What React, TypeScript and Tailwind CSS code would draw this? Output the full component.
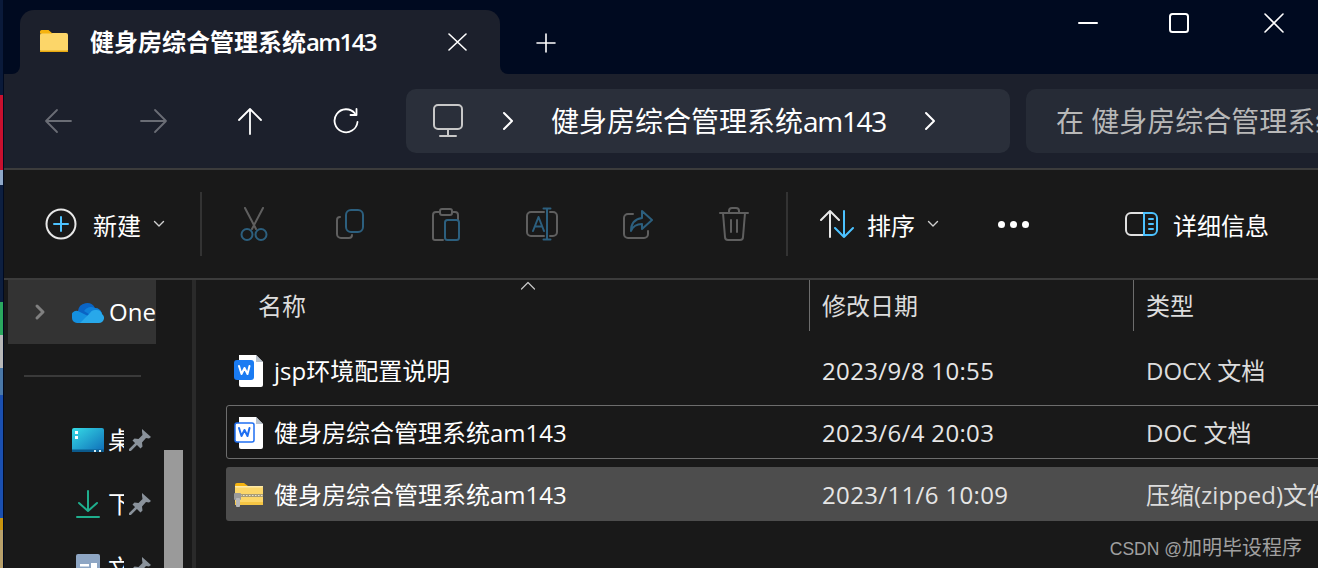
const GRAY = "#5f5f5f";
const BLUE = "#2c5f7e";

function Stroke({ w, h, children, color = "#fff", sw = 2 }: { w: number; h: number; children: React.ReactNode; color?: string; sw?: number }) {
  return (
    <svg width={w} height={h} viewBox={`0 0 ${w} ${h}`} fill="none" stroke={color} strokeWidth={sw} strokeLinecap="round" strokeLinejoin="round" className="shrink-0">
      {children}
    </svg>
  );
}

function FolderIcon() {
  return (
    <svg width="28" height="22" viewBox="0 0 28 22" className="shrink-0">
      <path d="M0 5a2 2 0 0 1 2-2h8l3-0h13a2 2 0 0 1 2 2v15a2 2 0 0 1-2 2H2a2 2 0 0 1-2-2z" fill="#fcd669" />
      <path d="M0 1.500a1.500 1.500 0 0 1 1.500-1.500h7l4 3.500h-12.500z" fill="#f5b30f" />
      <rect x="0" y="20.500" width="28" height="1.500" fill="#e8a90f" />
    </svg>
  );
}

function WordIcon({ outline }: { outline?: boolean }) {
  return (
    <svg width="30" height="32" viewBox="0 0 30 32" className="shrink-0">
      <path d="M5 0h17l7 7v23a2 2 0 0 1-2 2H7a2 2 0 0 1-2-2z" fill="#fff" />
      <path d="M22 0l7 7h-7z" fill="#b9c2cc" />
      {outline ? (
        <rect x="1" y="6" width="19" height="19" rx="2" fill="#fff" stroke="#1f6ff2" strokeWidth="1.500" />
      ) : (
        <rect x="0" y="5" width="20" height="20" rx="3" fill="#1a7bf2" />
      )}
      <path d="M5 11l2.500 8 3-6 3 6 2-8" fill="none" stroke={outline ? "#1f6ff2" : "#fff"} strokeWidth="2" strokeLinejoin="round" strokeLinecap="round" />
    </svg>
  );
}

function ZipIcon() {
  return (
    <svg width="30" height="24" viewBox="0 0 30 24" className="shrink-0">
      <path d="M1 2a2 2 0 0 1 2-2h7l4 3h-13z" fill="#f5b30f" />
      <rect x="1" y="3" width="28" height="19" rx="1.500" fill="#fcd669" />
      <rect x="1" y="3" width="28" height="1.500" fill="#fde9a6" />
      <rect x="1" y="19" width="28" height="3" fill="#f5c544" />
      <rect x="5" y="11" width="24" height="3" fill="#a89c76" />
      <path d="M6 12.500h23" stroke="#e8e4d4" strokeWidth="1" strokeDasharray="1.500 1.500" />
      <rect x="0" y="10" width="7" height="7" rx="1" fill="#9a9a9a" />
      <rect x="2" y="15" width="4" height="9" rx="1" fill="#b8b8b8" />
    </svg>
  );
}

function CloudIcon() {
  return (
    <svg width="32" height="21" viewBox="0 0 32 21" className="shrink-0">
      <path d="M6 9a9 9 0 0 1 17-3 7 7 0 0 1 7 8H4a5 5 0 0 1 2-5z" fill="#0a64c4" />
      <path d="M12 9a8 8 0 0 1 11-3 7 7 0 0 1 7 7l-10 1z" fill="#0f80d8" />
      <path d="M0 16a5 5 0 0 1 6-7l10 5 7-1-5 8H5a5 5 0 0 1-5-5z" fill="#1490df" />
      <path d="M18 11a6 6 0 0 1 6-3 6 6 0 0 1 6 4 5 5 0 0 1-3 9H8z" fill="#28a8ea" />
    </svg>
  );
}

function PinIcon() {
  return (
    <svg width="22" height="22" viewBox="0 0 22 22" className="shrink-0 ml-[5px]">
      <path d="M13 0l9 8-2 1.500-3-.5-4 4.500.5 4-2 2L3.500 11.500l2-2 4 .5 4-4-.5-3.500z" fill="#8a929b" />
      <path d="M7 15l-6 6" stroke="#8a929b" strokeWidth="2.500" strokeLinecap="round" />
    </svg>
  );
}

function DesktopIcon() {
  return (
    <svg width="32" height="24" viewBox="0 0 32 24" className="shrink-0">
      <defs>
        <linearGradient id="desk" x1="0" y1="0" x2="1" y2="1">
          <stop offset="0" stopColor="#35dbe6" />
          <stop offset="1" stopColor="#0f6cb8" />
        </linearGradient>
      </defs>
      <rect width="32" height="24" rx="2" fill="url(#desk)" />
      <rect y="21.500" width="32" height="2.500" fill="#0b5a8c" />
      <rect x="3" y="3" width="3" height="3" fill="#fff" />
      <rect x="3" y="8" width="3" height="3" fill="#fff" />
      <rect x="22" y="22" width="2" height="2" fill="#d6eef5" />
      <rect x="27" y="22" width="2" height="2" fill="#d6eef5" />
    </svg>
  );
}

function DocsIcon() {
  return (
    <svg width="24" height="28" viewBox="0 0 24 28" className="shrink-0">
      <rect width="24" height="28" rx="2" fill="#8ea6c4" />
      <rect x="4" y="10" width="9" height="2.500" fill="#fff" />
      <rect x="4" y="15" width="9" height="2.500" fill="#fff" />
      <rect x="15" y="9" width="6" height="9" fill="#fff" />
    </svg>
  );
}

function NavButton({ children }: { children: React.ReactNode }) {
  return <div className="w-[96px] flex justify-center items-center">{children}</div>;
}

function ToolButton({ children }: { children: React.ReactNode }) {
  return <div className="w-[96px] flex justify-center items-center">{children}</div>;
}

function Chevron({ color = "#d0d0d0" }: { color?: string }) {
  return (
    <Stroke w={12} h={8} color={color} sw={1.400}>
      <path d="M1.500 1.500l4.500 4.500 4.500-4.500" />
    </Stroke>
  );
}

function SideRow({ icon, label }: { icon: React.ReactNode; label: string }) {
  return (
    <div className="h-[64px] shrink-0 flex items-center">
      <div className="w-[96px] shrink-0 flex justify-end">
        <div className="w-[32px] flex justify-center">{icon}</div>
      </div>
      <div className="w-[16px] ml-[4px] shrink-0 overflow-hidden whitespace-nowrap text-[24px] leading-none text-white">{label}</div>
      <PinIcon />
    </div>
  );
}

const rows = [
  { icon: <WordIcon />, name: "jsp环境配置说明", date: "2023/9/8 10:55", type: "DOCX 文档", cls: "border-transparent" },
  { icon: <WordIcon outline />, name: "健身房综合管理系统am143", date: "2023/6/4 20:03", type: "DOC 文档", cls: "border-[#6d6d6d]" },
  { icon: <ZipIcon />, name: "健身房综合管理系统am143", date: "2023/11/6 10:09", type: "压缩(zipped)文件夹", cls: "border-transparent bg-[#4d4d4d]" },
];

export default function App() {
  return (
    <div className="relative w-[1318px] h-[568px] overflow-hidden flex bg-[#191919] font-['Open_Sans','Noto_Sans_CJK_SC',sans-serif] text-white">
      {/* bit of desktop wallpaper showing at the left edge */}
      <div className="w-[3px] shrink-0 flex flex-col">
        <div className="h-[95px] bg-[#0a1a3a]" />
        <div className="h-[75px] bg-[#c8102e]" />
        <div className="h-[15px] bg-[#8fa8c8]" />
        <div className="h-[117px] bg-[#0d1f40]" />
        <div className="h-[33px] bg-[#2aa85f]" />
        <div className="h-[33px] bg-[#b8b8b8]" />
        <div className="h-[27px] bg-[#4a78a8]" />
        <div className="h-[123px] bg-[#1a4fb0]" />
        <div className="h-[12px] bg-[#c8940f]" />
        <div className="flex-1 bg-[#b8a06a]" />
      </div>
      <div className="w-[1px] shrink-0 bg-[#000a20]" />

      <div className="flex-1 min-w-0 flex flex-col">
        {/* title bar */}
        <div className="h-[74px] shrink-0 bg-[#000a20] flex items-end pl-[16px]">
          <div className="relative w-[480px] h-[64px] bg-[#1c202c] rounded-t-[14px] flex items-start pl-[20px] pt-[20px]">
            <div className="absolute right-full bottom-0 size-2 bg-[#1c202c]">
              <div className="size-full bg-[#000a20] rounded-br-lg" />
            </div>
            <div className="absolute left-full bottom-0 size-2 bg-[#1c202c]">
              <div className="size-full bg-[#000a20] rounded-bl-lg" />
            </div>
            <FolderIcon />
            <span className="ml-[22px] text-[24px] leading-[28px] font-bold -mt-[2px] whitespace-nowrap">
              健身房综合管理系统<span className="font-semibold tracking-[-1.6px]">am143</span>
            </span>
            <div className="ml-auto mr-[33px] mt-[3px]">
              <Stroke w={19} h={18} sw={1.600}>
                <path d="M1 1l17 16M18 1L1 17" />
              </Stroke>
            </div>
          </div>
          <div className="ml-[36px] mb-[21px]">
            <Stroke w={20} h={20} sw={1.600}>
              <path d="M10 1v18M1 10h18" />
            </Stroke>
          </div>
          <div className="ml-auto self-start flex items-center h-[46px] pr-[34px]">
            <Stroke w={20} h={4} sw={2}>
              <path d="M1 2h18" />
            </Stroke>
            <div className="ml-[71px]">
              <Stroke w={20} h={20} sw={2}>
                <rect x="1" y="1" width="18" height="18" rx="2.500" />
              </Stroke>
            </div>
            <div className="ml-[75px]">
              <Stroke w={20} h={20} sw={1.600}>
                <path d="M1 1l18 18M19 1L1 19" />
              </Stroke>
            </div>
          </div>
        </div>

        {/* address bar */}
        <div className="h-[96px] shrink-0 bg-[#1c202c] border-b-2 border-[#3c3c3c] flex items-start pt-[15px]">
          <div className="h-[64px] flex items-center pl-[6px]">
            <NavButton>
              <Stroke w={28} h={26} color="#6a6d75" sw={1.800}>
                <path d="M27 13H2M13 2L2 13l11 11" />
              </Stroke>
            </NavButton>
            <NavButton>
              <Stroke w={28} h={26} color="#6a6d75" sw={1.800}>
                <path d="M1 13h25M15 2l11 11-11 11" />
              </Stroke>
            </NavButton>
            <NavButton>
              <Stroke w={26} h={28} sw={1.800}>
                <path d="M13 27V2M2 13L13 2l11 11" />
              </Stroke>
            </NavButton>
            <NavButton>
              <Stroke w={26} h={26} sw={1.800}>
                <path d="M22 5.500A11.500 11.500 0 1 0 24.500 14" />
                <path d="M23.500 1v6h-6" />
              </Stroke>
            </NavButton>
          </div>
          <div className="w-[604px] h-[64px] ml-[12px] rounded-[10px] bg-[#2a2f3a] flex items-center pl-[27px] shrink-0">
            <Stroke w={30} h={34} color="#c8c8c8" sw={2}>
              <rect x="1" y="1" width="28" height="24" rx="4" />
              <path d="M15 25v6M7 32h16" />
            </Stroke>
            <div className="ml-[39px]">
              <Stroke w={12} h={20} sw={2}>
                <path d="M2 2l8 8-8 8" />
              </Stroke>
            </div>
            <span className="ml-[37px] text-[28px] leading-none whitespace-nowrap w-[373px]">
              健身房综合管理系统<span className="tracking-[-1.3px]">am143</span>
            </span>
            <Stroke w={12} h={20} sw={2}>
              <path d="M2 2l8 8-8 8" />
            </Stroke>
          </div>
          <div className="flex-1 h-[64px] ml-[16px] rounded-l-[10px] bg-[#262b36] flex items-center pl-[30px] overflow-hidden">
            <span className="text-[28px] leading-none whitespace-nowrap text-[#b8b8b8]">在 健身房综合管理系统am143 中搜索</span>
          </div>
        </div>

        {/* command bar */}
        <div className="h-[110px] shrink-0 border-b-2 border-[#3c3c3c] flex items-center">
          <div className="w-[196px] flex items-center pl-[41px] shrink-0">
            <svg width="32" height="32" viewBox="0 0 32 32" fill="none" strokeLinecap="round" className="shrink-0">
              <circle cx="16" cy="16" r="14.500" stroke="#e8e8e8" strokeWidth="2" />
              <path d="M16 9v14M9 16h14" stroke="#4cc2ff" strokeWidth="2" />
            </svg>
            <span className="ml-[16px] mt-[3px] text-[24px] leading-none">新建</span>
            <div className="ml-[12px]">
              <Chevron />
            </div>
          </div>
          <div className="w-[2px] h-[64px] bg-[#333] shrink-0" />
          <div className="flex items-center shrink-0 pl-[4px]">
            <ToolButton>
              <svg width="28" height="34" viewBox="0 0 28 34" fill="none" strokeWidth="2" strokeLinecap="round">
                <path d="M5 1l11 21M23 1L12 22" stroke={GRAY} />
                <circle cx="7" cy="27.500" r="5.500" stroke={BLUE} />
                <circle cx="21" cy="27.500" r="5.500" stroke={BLUE} />
              </svg>
            </ToolButton>
            <ToolButton>
              <svg width="28" height="30" viewBox="0 0 28 30" fill="none" strokeWidth="2" strokeLinecap="round">
                <path d="M4 8a3 3 0 0 0-3 3v14a4 4 0 0 0 4 4h8a3 3 0 0 0 3-3" stroke={GRAY} />
                <rect x="10" y="1" width="17" height="22" rx="5" stroke={BLUE} />
              </svg>
            </ToolButton>
            <ToolButton>
              <svg width="28" height="34" viewBox="0 0 28 34" fill="none" strokeWidth="2" strokeLinecap="round">
                <path d="M8 5H4a3 3 0 0 0-3 3v23a2 2 0 0 0 2 2h8M20 5h3a3 3 0 0 1 3 3v5" stroke={GRAY} />
                <rect x="8" y="2" width="12" height="6" rx="2" stroke={GRAY} />
                <rect x="13" y="13" width="14" height="20" rx="2.500" stroke={BLUE} />
              </svg>
            </ToolButton>
            <ToolButton>
              <svg width="32" height="34" viewBox="0 0 32 34" fill="none" strokeWidth="2" strokeLinecap="round" strokeLinejoin="round">
                <path d="M18 5H5a4 4 0 0 0-4 4v16a4 4 0 0 0 4 4h13M24 5h3a4 4 0 0 1 4 4v16a4 4 0 0 1-4 4h-3" stroke={GRAY} />
                <path d="M7 24l5.500-14L18 24M9 19.500h7" stroke={BLUE} />
                <path d="M21 2v30M17.500 1.500h7M17.500 32.500h7" stroke={BLUE} />
              </svg>
            </ToolButton>
            <ToolButton>
              <svg width="30" height="30" viewBox="0 0 30 30" fill="none" strokeWidth="2" strokeLinecap="round" strokeLinejoin="round">
                <path d="M10 5H5a4 4 0 0 0-4 4v16a4 4 0 0 0 4 4h16a4 4 0 0 0 4-4v-3" stroke={GRAY} />
                <path d="M19 2l10 9-10 9v-5c-6 0-9 2-11 7 0-8 4-12 11-13z" stroke={BLUE} />
              </svg>
            </ToolButton>
            <ToolButton>
              <svg width="30" height="34" viewBox="0 0 30 34" fill="none" strokeWidth="2" strokeLinecap="round" strokeLinejoin="round" stroke={GRAY}>
                <path d="M1 6h28M10 6V4a3 3 0 0 1 3-3h4a3 3 0 0 1 3 3v2M4 6l2 24a3 3 0 0 0 3 3h12a3 3 0 0 0 3-3l2-24M12 13v12M18 13v12" />
              </svg>
            </ToolButton>
          </div>
          <div className="w-[2px] h-[64px] bg-[#333] shrink-0 ml-[4px]" />
          <div className="ml-[32px] shrink-0 flex items-center">
            <svg width="34" height="30" viewBox="0 0 34 30" fill="none" strokeWidth="2" strokeLinecap="round" strokeLinejoin="round">
              <path d="M10 28V2M1 11l9-9 9 9" stroke="#e8e8e8" />
              <path d="M24 2v26M15 19l9 9 9-9" stroke="#4cc2ff" />
            </svg>
            <span className="ml-[13px] mt-[3px] text-[24px] leading-none">排序</span>
            <div className="ml-[12px]">
              <Chevron />
            </div>
            <div className="ml-[59px] flex gap-[5px]">
              <div className="size-[7px] rounded-full bg-white" />
              <div className="size-[7px] rounded-full bg-white" />
              <div className="size-[7px] rounded-full bg-white" />
            </div>
          </div>
          <div className="ml-[96px] shrink-0 flex items-center">
            <svg width="33" height="24" viewBox="0 0 33 24" fill="none" strokeWidth="2" strokeLinecap="round">
              <path d="M19 1H6a5 5 0 0 0-5 5v12a5 5 0 0 0 5 5h13" stroke="#e0e0e0" />
              <path d="M19 1h8a5 5 0 0 1 5 5v12a5 5 0 0 1-5 5h-8zM24 7h4M24 12h4M24 17h4" stroke="#4cc2ff" />
            </svg>
            <span className="ml-[15px] mt-[3px] text-[24px] leading-none whitespace-nowrap">详细信息</span>
          </div>
        </div>

        {/* body */}
        <div className="flex-1 min-h-0 flex">
          <div className="w-[188px] shrink-0 flex">
            <div className="w-[148px] shrink-0 ml-[4px] flex flex-col">
              <div className="h-[64px] bg-[#333333] flex items-center pl-[26px] overflow-hidden shrink-0">
                <Stroke w={12} h={18} color="#808080" sw={3}>
                  <path d="M3 3l6 6-6 6" />
                </Stroke>
                <div className="ml-[26px]">
                  <CloudIcon />
                </div>
                <span className="ml-[5px] text-[24px] leading-none">OneDrive</span>
              </div>
              <div className="mx-[16px] w-[117px] h-[2px] mt-[31px] mb-[31px] bg-[#3a3a3a] shrink-0" />
              <SideRow icon={<DesktopIcon />} label="桌面" />
              <SideRow
                icon={
                  <Stroke w={24} h={28} color="#1fae8d" sw={2}>
                    <path d="M12 1v19M3 13l9 8 9-8M1 27h22" />
                  </Stroke>
                }
                label="下载"
              />
              <SideRow icon={<DocsIcon />} label="文档" />
            </div>
            <div className="w-[19px] h-[118px] ml-[8px] mt-[170px] bg-[#9a9a9a] shrink-0" />
          </div>
          <div className="w-[4px] shrink-0 bg-[#2a2a2a]" />

          <div className="relative flex-1 min-w-0 overflow-hidden">
            <div className="absolute left-[324px] top-[1px]">
              <Stroke w={16} h={9} color="#c8c8c8" sw={1.200}>
                <path d="M1.500 8l6.500-6.500 6.500 6.500" />
              </Stroke>
            </div>
            <div className="h-[51px] flex items-stretch text-[24px] text-[#dcdcdc]">
              <div className="w-[613px] shrink-0 pl-[62px] flex items-center">名称</div>
              <div className="w-[324px] shrink-0 pl-[12px] flex items-center border-l border-[#6d6d6d]">修改日期</div>
              <div className="w-[300px] shrink-0 pl-[12px] flex items-center border-l border-[#6d6d6d]">类型</div>
            </div>
            <div className="mt-[12px] ml-[30px] w-[1200px] flex flex-col gap-[8px]">
              {rows.map((row) => (
                <div key={row.date} className={`h-[54px] pt-[2px] rounded-[3px] border flex items-center text-[24px] leading-none whitespace-nowrap ${row.cls}`}>
                  <div className="w-[47px] pl-[7px] shrink-0 flex items-center">{row.icon}</div>
                  <div className="w-[548px] shrink-0">{row.name}</div>
                  <div className="w-[324px] shrink-0 text-[#e6e6e6] tracking-[0.35px]">{row.date}</div>
                  <div className="text-[#dcdcdc]">{row.type}</div>
                </div>
              ))}
            </div>
          </div>
        </div>
      </div>

      {/* CSDN watermark */}
      <div className="absolute right-[16px] bottom-[10px] text-[20px] leading-none text-[#a0a0a0] font-['Liberation_Sans','Noto_Sans_CJK_SC',sans-serif]">
        <span className="text-[17.5px]">CSDN @</span>加明毕设程序
      </div>
    </div>
  );
}
